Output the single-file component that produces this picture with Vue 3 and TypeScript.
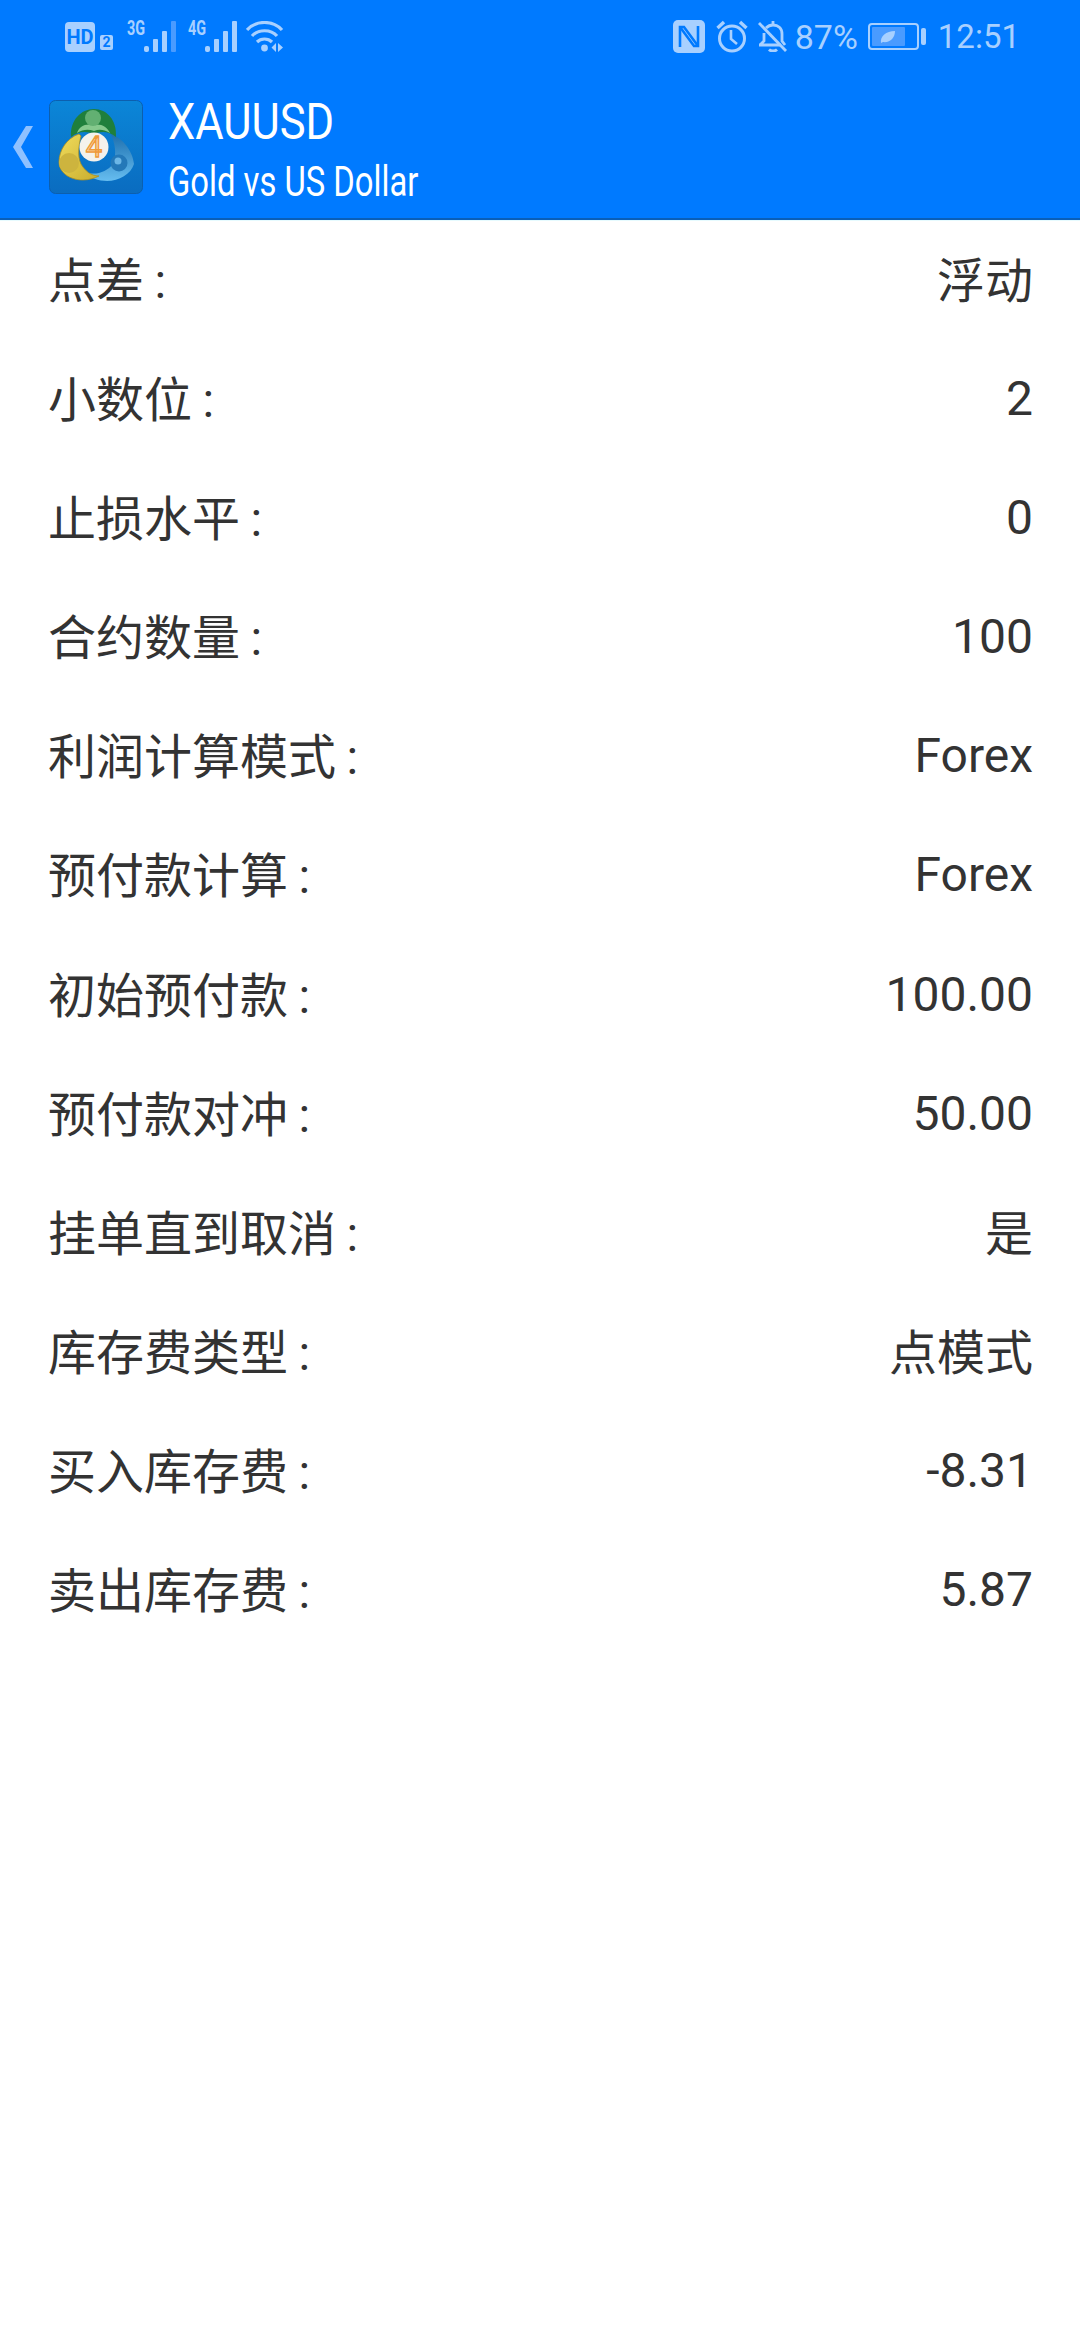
<script setup lang="ts">
interface Row {
  label: string
  value: string
}

const rows: Row[] = [
  { label: '点差', value: '浮动' },
  { label: '小数位', value: '2' },
  { label: '止损水平', value: '0' },
  { label: '合约数量', value: '100' },
  { label: '利润计算模式', value: 'Forex' },
  { label: '预付款计算', value: 'Forex' },
  { label: '初始预付款', value: '100.00' },
  { label: '预付款对冲', value: '50.00' },
  { label: '挂单直到取消', value: '是' },
  { label: '库存费类型', value: '点模式' },
  { label: '买入库存费', value: '-8.31' },
  { label: '卖出库存费', value: '5.87' },
]

const isCjk = (text: string) => /[\u4e00-\u9fff]/.test(text)
</script>

<template>
  <div class="page">
    <header class="top">
      <!-- Status bar -->
      <div class="status">
        <div class="status-left">
          <span class="hd">HD</span>
          <span class="sim">2</span>
          <span class="net net-3g">
            <span class="net-label"><span>3G</span></span>
            <svg width="34" height="31" viewBox="0 0 34 31">
              <rect x="0" y="25" width="5" height="6" rx="2" fill="#a8d0ff" />
              <rect x="9" y="18" width="5" height="13" rx="1" fill="#a8d0ff" />
              <rect x="18" y="10" width="5" height="21" rx="1" fill="#a8d0ff" />
              <rect x="27" y="0" width="5" height="31" rx="1" fill="#4a9bff" />
            </svg>
          </span>
          <span class="net net-4g">
            <span class="net-label"><span>4G</span></span>
            <svg width="34" height="31" viewBox="0 0 34 31">
              <rect x="0" y="25" width="5" height="6" rx="2" fill="#a8d0ff" />
              <rect x="9" y="18" width="5" height="13" rx="1" fill="#a8d0ff" />
              <rect x="18" y="10" width="5" height="21" rx="1" fill="#a8d0ff" />
              <rect x="27" y="0" width="5" height="31" rx="1" fill="#a8d0ff" />
            </svg>
          </span>
          <svg class="wifi" width="38" height="31" viewBox="0 0 38 31" fill="none" stroke="#a8d0ff" stroke-width="3.2">
            <path d="M1 9 C10 -1 27 -1 36 9" />
            <path d="M6 15 C12 8 25 8 31 15" />
            <path d="M11 21 C15 17 22 17 26 21" />
            <circle cx="18.5" cy="27" r="3.4" fill="#a8d0ff" stroke="none" />
            <path d="M30 22 V31 L25.5 26.5 Z M32 22 L37 26.5 L32 31 Z" fill="#a8d0ff" stroke="none" />
          </svg>
        </div>
        <div class="status-right">
          <svg width="32" height="33" viewBox="0 0 32 33">
            <rect width="32" height="33" rx="5" fill="#a8d0ff" />
            <path d="M7 27 V7 H11 L25 26" fill="none" stroke="#007aff" stroke-width="2.6" />
            <path d="M25 6 V26 H21 L7 7" fill="none" stroke="#007aff" stroke-width="2.6" />
          </svg>
          <svg class="alarm" width="32" height="33" viewBox="0 0 32 33" fill="none" stroke="#a8d0ff" stroke-width="3">
            <circle cx="16" cy="18.5" r="12.5" />
            <path d="M15 10 V19 L21 24" stroke-width="2.6" />
            <path d="M1.5 8 L8 2 M30.5 8 L24 2" stroke-width="3.4" />
          </svg>
          <svg class="bell" width="30" height="31" viewBox="0 0 30 31" fill="none" stroke="#a8d0ff" stroke-width="2.8">
            <path d="M1 24 H23 M27 24 L24 20 V13 C24 7 20 4 15 4 C12 4 10 5 8 7 M6 12 V20 L2 24" />
            <path d="M11 28.5 C13 30.5 17 30.5 19 28.5" />
            <path d="M15 0 V4" />
            <path d="M1 2 L28 30" />
          </svg>
          <span class="pct">87%</span>
          <span class="battery">
            <span class="battery-fill">
              <svg width="16" height="14" viewBox="0 0 16 14">
                <path d="M1 13 C0 6 6 1 15 1 C15 8 10 13 3 12 Z" fill="#a8d0ff" />
              </svg>
            </span>
          </span>
          <span class="battery-tip" />
          <span class="time">12:51</span>
        </div>
      </div>

      <!-- Symbol header -->
      <div class="title-bar">
        <svg class="back" width="21" height="42" viewBox="0 0 21 42">
          <path d="M20 0 H13 L0 21 L13 42 H20 L8 21 Z" fill="#8fc1ff" />
        </svg>
        <svg class="logo" width="94" height="94" viewBox="0 0 94 94">
          <defs>
            <linearGradient id="tile" x1="0" y1="0" x2="0" y2="1">
              <stop offset="0" stop-color="#0b86d8" />
              <stop offset="1" stop-color="#0a6cc0" />
            </linearGradient>
            <linearGradient id="gold" x1="0" y1="0" x2="1" y2="1">
              <stop offset="0" stop-color="#f0dc5c" />
              <stop offset="1" stop-color="#c9ad2e" />
            </linearGradient>
            <linearGradient id="blue" x1="0" y1="0" x2="0" y2="1">
              <stop offset="0" stop-color="#1d6fae" />
              <stop offset="1" stop-color="#66bdf0" />
            </linearGradient>
          </defs>
          <rect x="0.5" y="0.5" width="93" height="93" rx="6" fill="url(#tile)" stroke="#0c5fae" />
          <path d="M62 34 C74 38 84 52 85 64 C82 74 70 81 58 81 C50 81 40 78 36 72 C46 76 58 72 64 64 C68 54 66 44 62 34 Z" fill="url(#blue)" />
          <path d="M30 34 C18 38 10 50 10 62 C10 72 20 80 34 80 C40 80 46 78 50 76 C42 76 36 71 32 64 C28 56 30 44 32 36 Z" fill="url(#gold)" stroke="#a98f22" stroke-width="0.8" />
          <path d="M22 37 C21 20 32 9 45 9 C58 9 68 20 67 37 C60 31 52 31 45 34 C38 31 29 31 22 37 Z" fill="#1f7f3c" />
          <path d="M28 33 C30 26 37 23 44 25 C51 23 58 26 61 33 C54 29 50 29 45 31 C40 29 34 29 28 33 Z" fill="#86c98d" />
          <circle cx="44" cy="18" r="8" fill="#62b072" />
          <circle cx="20" cy="63" r="10" fill="#cdb43e" />
          <circle cx="70" cy="63" r="8.5" fill="#2478b8" />
          <circle cx="69" cy="61" r="3.5" fill="#6cb6e6" />
          <circle cx="45" cy="47" r="14.5" fill="#f4f2ec" />
          <text x="45" y="57" class="logo-four" text-anchor="middle">4</text>
        </svg>
        <div class="names">
          <span class="symbol">XAUUSD</span>
          <span class="desc">Gold vs US Dollar</span>
        </div>
      </div>
    </header>

    <!-- Symbol properties -->
    <ul class="list">
      <li v-for="row in rows" :key="row.label" class="row">
        <span class="label cjk">{{ row.label }} :</span>
        <span :class="{ cjk: isCjk(row.value) }">{{ row.value }}</span>
      </li>
    </ul>
  </div>
</template>

<style>
html,
body {
  background: #fff;
}
</style>

<style scoped>
.page {
  width: 1080px;
  height: 2340px;
  overflow: hidden;
  background: #fff;
  font-family: Roboto, "Noto Sans CJK SC", sans-serif;
}

.top {
  background: #007aff;
  border-bottom: 2px solid #0a5fb8;
  height: 220px;
  box-sizing: border-box;
}

.status {
  height: 72px;
  padding: 1px 60px 0 65px;
  box-sizing: border-box;
  display: flex;
  align-items: center;
  justify-content: space-between;
  color: #a8d0ff;
}

.status-left,
.status-right {
  display: flex;
  align-items: center;
}

.hd {
  width: 30px;
  height: 30px;
  border-radius: 4px;
  background: #a8d0ff;
  color: #007aff;
  font-size: 20px;
  font-weight: 700;
  line-height: 30px;
  text-align: center;
}

.sim {
  width: 13px;
  height: 15px;
  margin: 12px 0 0 5px;
  border-radius: 2px;
  background: #a8d0ff;
  color: #007aff;
  font-size: 14px;
  font-weight: 700;
  line-height: 15px;
  text-align: center;
}

.net {
  display: flex;
  align-items: flex-end;
  height: 31px;
}

.net-3g {
  margin-left: 14px;
}

.net-4g {
  margin-left: 10px;
}

.net-label {
  align-self: flex-start;
  width: 17px;
  font-size: 20px;
  font-weight: 700;
  line-height: 14px;
}

.net-label span {
  display: inline-block;
  transform: scaleX(0.72);
  transform-origin: left center;
}

.wifi {
  margin-left: 7px;
}

.alarm {
  margin-left: 11px;
}

.bell {
  margin-left: 10px;
}

.pct {
  margin-left: 7px;
  font-size: 34px;
}

.battery {
  margin-left: 10px;
  width: 51px;
  height: 27px;
  box-sizing: border-box;
  border: 2px solid #a8d0ff;
  border-radius: 4px;
  padding: 2px;
  display: flex;
}

.battery-fill {
  width: 33px;
  background: #4a9bff;
  display: flex;
  align-items: center;
  justify-content: center;
  border-radius: 1px;
}

.battery-tip {
  width: 5px;
  height: 17px;
  margin-left: 2px;
  border-radius: 2px;
  background: #a8d0ff;
}

.time {
  margin-left: 12px;
  font-size: 33px;
}

.title-bar {
  height: 146px;
  display: flex;
  align-items: center;
  padding-left: 13px;
  color: #fff;
}

.back {
  margin-top: 3px;
}

.logo {
  margin-left: 15px;
  margin-top: 4px;
}

.logo-four {
  font-family: Roboto, sans-serif;
  font-size: 29px;
  fill: #f8dfb8;
  stroke: #ef9a3a;
  stroke-width: 1.4;
}

.names {
  margin-left: 25px;
  margin-top: 14px;
  display: flex;
  flex-direction: column;
  align-items: flex-start;
}

.symbol,
.desc {
  transform-origin: left center;
  white-space: nowrap;
}

.symbol {
  font-size: 50px;
  line-height: 60px;
  transform: scaleX(0.87);
}

.desc {
  font-size: 42px;
  line-height: 60px;
  transform: scaleX(0.78);
}

.list {
  list-style: none;
  margin: 0;
  padding: 0 47px 0 48px;
  color: #333;
  font-size: 48px;
  box-shadow: inset 0 1px 0 #e6fbff;
}

.row {
  height: 119.1px;
  line-height: 119px;
  display: flex;
  align-items: baseline;
  justify-content: space-between;
}

.cjk {
  transform: translateY(2px);
}

.label {
  word-spacing: -1.5px;
}
</style>
